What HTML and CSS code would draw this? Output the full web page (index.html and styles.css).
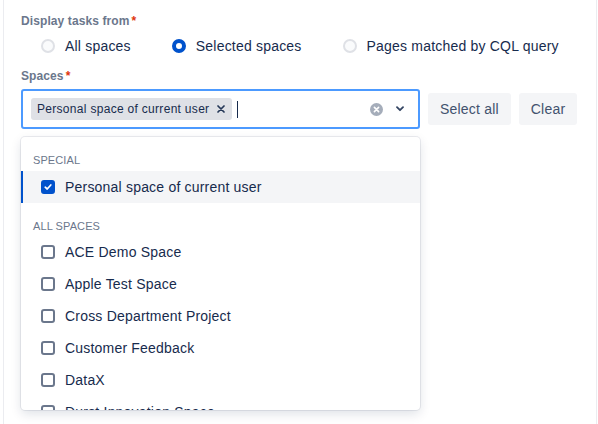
FILE: index.html
```html
<!DOCTYPE html>
<html lang="en">
<head>
<meta charset="utf-8">
<title>Display tasks</title>
<link rel="stylesheet" href="styles.css">
</head>
<body>
<div class="panel">
  <div class="field-label">Display tasks from<span class="req">*</span></div>
  <div class="radio-row">
    <label class="radio"><span class="radio-dot"></span>All spaces</label>
    <label class="radio"><span class="radio-dot on"></span>Selected spaces</label>
    <label class="radio"><span class="radio-dot"></span>Pages matched by CQL query</label>
  </div>
  <div class="field-label spaces-label">Spaces<span class="req">*</span></div>
  <div class="select-row">
    <div class="select">
      <div class="value">
        <span class="tag"><span class="tag-text">Personal space of current user</span><span class="tag-x"><svg width="8" height="8" viewBox="0 0 8 8"><path d="M1 1L7 7M7 1L1 7" stroke="#253858" stroke-width="1.7" stroke-linecap="round"/></svg></span></span>
        <span class="caret"></span>
      </div>
      <span class="ind"><svg width="13" height="13" viewBox="0 0 13 13"><circle cx="6.5" cy="6.5" r="6.5" fill="#a5adba"/><path d="M4.4 4.4L8.6 8.6M8.6 4.4L4.4 8.6" stroke="#fff" stroke-width="1.6" stroke-linecap="round"/></svg></span>
      <span class="ind"><svg width="10" height="6" viewBox="0 0 10 6"><path d="M2 1.2L5 4.2L8 1.2" fill="none" stroke="#344563" stroke-width="1.8" stroke-linecap="round" stroke-linejoin="round"/></svg></span>
    </div>
    <button class="btn">Select all</button>
    <button class="btn">Clear</button>
  </div>
  <div class="menu">
    <div class="group">
      <div class="group-head">SPECIAL</div>
      <div class="option selected"><span class="cb on"><svg width="10" height="10" viewBox="0 0 10 10"><path d="M2.2 5.2L4.2 7L7.8 3" fill="none" stroke="#fff" stroke-width="1.7" stroke-linecap="round" stroke-linejoin="round"/></svg></span>Personal space of current user</div>
    </div>
    <div class="group">
      <div class="group-head">ALL SPACES</div>
      <div class="option"><span class="cb"></span>ACE Demo Space</div>
      <div class="option"><span class="cb"></span>Apple Test Space</div>
      <div class="option"><span class="cb"></span>Cross Department Project</div>
      <div class="option"><span class="cb"></span>Customer Feedback</div>
      <div class="option"><span class="cb"></span>DataX</div>
      <div class="option"><span class="cb"></span>Durst Innovation Space</div>
    </div>
  </div>
</div>
</body>
</html>
```

FILE: styles.css
```css
html, body {
  margin: 0;
  padding: 0;
  background: #fff;
}
body {
  font-family: "Liberation Sans", Arial, sans-serif;
  color: #172b4d;
  font-size: 14px;
  letter-spacing: 0.2px;
}
.panel {
  box-sizing: border-box;
  height: 424px;
  margin: 0 1px 0 3px;
  border-left: 1px solid #ebecf0;
  border-right: 1px solid #ebecf0;
  padding: 13px 17px 0;
  overflow: hidden;
}
.field-label {
  font-size: 12px;
  line-height: 16px;
  font-weight: 700;
  color: #6b778c;
  letter-spacing: 0.1px;
}
.req {
  color: #de350b;
  margin-left: 2px;
}
.radio-row {
  display: flex;
  align-items: center;
  gap: 41px;
  height: 24px;
  margin-top: 5px;
  padding-left: 20px;
}
.radio {
  display: flex;
  align-items: center;
  gap: 10px;
  line-height: 20px;
  white-space: nowrap;
}
.radio-dot {
  box-sizing: border-box;
  width: 14px;
  height: 14px;
  border-radius: 50%;
  border: 2px solid #dfe1e6;
  background: #fafbfc;
}
.radio-dot.on {
  border: 4.5px solid #0052cc;
  background: #fff;
}
.spaces-label {
  margin-top: 10px;
}
.select-row {
  display: flex;
  align-items: center;
  gap: 8px;
  margin-top: 5px;
}
.select {
  box-sizing: border-box;
  flex: 0 0 399px;
  width: 399px;
  height: 40px;
  border: 2px solid #4c9aff;
  border-radius: 3px;
  background: #fff;
  display: flex;
  align-items: center;
  padding: 0 6px 0 8px;
}
.value {
  flex: 1;
  display: flex;
  align-items: center;
  gap: 5px;
}
.tag {
  display: flex;
  align-items: center;
  height: 22px;
  background: #dfe1e6;
  border-radius: 3px;
  padding-left: 6px;
}
.tag-text {
  font-size: 12px;
  letter-spacing: 0.3px;
  color: #172b4d;
  white-space: nowrap;
}
.tag-x {
  width: 23px;
  display: flex;
  justify-content: center;
  align-items: center;
}
.caret {
  width: 1px;
  height: 17px;
  background: #172b4d;
}
.ind {
  width: 24px;
  height: 24px;
  display: flex;
  align-items: center;
  justify-content: center;
}
.btn {
  flex: 0 0 auto;
  white-space: nowrap;
  height: 32px;
  border: none;
  border-radius: 3px;
  background: #f4f5f7;
  color: #42526e;
  font-family: inherit;
  font-size: 14px;
  letter-spacing: 0.2px;
  padding: 0 12px;
}
.menu {
  box-sizing: border-box;
  width: 399px;
  height: 273px;
  margin-top: 8px;
  border-radius: 4px;
  background: #fff;
  box-shadow: 0 0 0 1px rgba(9, 30, 66, 0.08), 0 4px 11px rgba(9, 30, 66, 0.13);
  padding-top: 4px;
  overflow: hidden;
}
.group {
  padding-bottom: 4px;
}
.group-head {
  font-size: 11px;
  line-height: 16px;
  color: #6b778c;
  padding: 11px 12px 3px;
  letter-spacing: 0.1px;
}
.group + .group .group-head {
  padding-bottom: 2px;
}
.option {
  box-sizing: border-box;
  height: 32px;
  display: flex;
  align-items: center;
  border-left: 2px solid transparent;
  padding-left: 18px;
  white-space: nowrap;
}
.option.selected {
  background: #f4f5f7;
  border-left-color: #0052cc;
}
.cb {
  box-sizing: border-box;
  width: 14px;
  height: 14px;
  border: 2px solid #6b778c;
  border-radius: 3px;
  margin-right: 10px;
  display: flex;
  align-items: center;
  justify-content: center;
}
.cb.on {
  background: #0052cc;
  border-color: #0052cc;
}
```
